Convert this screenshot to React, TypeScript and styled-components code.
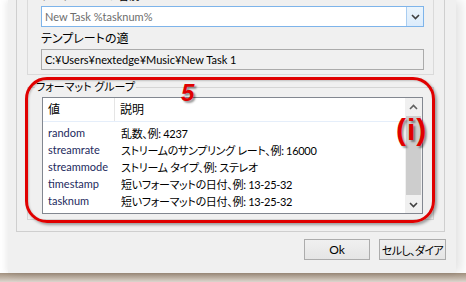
import React from "react";
import styled, { createGlobalStyle } from "styled-components";

const GlobalStyle = createGlobalStyle`
  html, body {
    margin: 0;
    padding: 0;
    background: #ffffff;
  }
  body {
    font-family: Lato, "Noto Sans CJK JP", sans-serif;
    font-size: 11px;
    font-feature-settings: "palt";
  }
`;

const Page = styled.div`
  position: relative;
  width: 466px;
  height: 282px;
  overflow: hidden;
  background: linear-gradient(to bottom, #ffffff 0, #ffffff 273px, #a39280 273px, #c2b6a9 278px, #ddd6cf 282px);
`;

const Window = styled.div`
  margin-left: 8px;
  width: 448px;
  height: 273px;
  background: #f0f0f0;
  box-shadow: -3px 0 6px rgba(0, 0, 0, 0.06), 6px 0 10px rgba(0, 0, 0, 0.1);
  display: flex;
  flex-direction: column;
`;

const OuterPanel = styled.div`
  margin-left: 8px;
  width: 429px;
  height: 232px;
  border: 1px solid #cfcfcf;
  border-top: none;
  box-sizing: border-box;
  padding-left: 10px;
  display: flex;
  flex-direction: column;
`;

const UpperBox = styled.div`
  width: 407px;
  height: 75px;
  box-sizing: border-box;
  border: 1px solid #dadada;
  border-top: none;
  padding: 0 0 0 13px;
  display: flex;
  flex-direction: column;
`;

const Label = styled.div<{ $clip?: boolean }>`
  height: 14px;
  line-height: 14px;
  font-size: 12px;
  color: #000;
  margin-top: ${({ $clip }) => ($clip ? "-11px" : "5px")};
  margin-bottom: ${({ $clip }) => ($clip ? "3px" : "0")};
  white-space: nowrap;
`;

const Combo = styled.div`
  width: 383px;
  height: 21px;
  box-sizing: border-box;
  border: 1px solid #7eb4ea;
  background: #fff;
  display: flex;
  align-items: center;
`;

const ComboText = styled.div`
  flex: 1;
  padding-left: 3px;
  color: #6d6d6d;
  line-height: 19px;
  white-space: nowrap;
`;

const ComboButton = styled.div`
  width: 16px;
  height: 19px;
  border-left: 1px solid #a9cdf1;
  background: linear-gradient(#eaf4fc, #dcecfc);
  display: flex;
  align-items: center;
  justify-content: center;
`;

const PathBox = styled.div`
  width: 383px;
  height: 21px;
  margin-top: 3px;
  box-sizing: border-box;
  border: 1px solid #ababab;
  background: #f0f0f0;
  padding-left: 3px;
  line-height: 19px;
  color: #000;
  white-space: nowrap;
`;

const Group = styled.fieldset`
  width: 407px;
  height: 140px;
  margin: 5px 0 0 0;
  padding: 0 0 0 14px;
  box-sizing: border-box;
  border: 1px solid #d5d5d5;
`;

const Legend = styled.legend`
  padding: 0 1px;
  margin-left: -7px;
  line-height: 14px;
  color: #000;
`;

const ListView = styled.div`
  width: 381px;
  height: 117px;
  margin-top: 3px;
  box-sizing: border-box;
  border: 1px solid #828790;
  background: #fff;
  display: flex;
`;

const ListBody = styled.div`
  flex: 1;
  display: flex;
  flex-direction: column;
`;

const HeaderRow = styled.div`
  height: 24px;
  display: flex;
  border-bottom: 1px solid #e5eefa;
  box-sizing: border-box;
`;

const HeaderCell = styled.div<{ $w?: number }>`
  width: ${({ $w }) => ($w ? `${$w}px` : "auto")};
  flex: ${({ $w }) => ($w ? "none" : "1")};
  padding-left: 5px;
  line-height: 23px;
  font-size: 12px;
  box-sizing: border-box;
  border-right: ${({ $w }) => ($w ? "1px solid #e5e5e5" : "none")};
  color: #000;
`;

const Rows = styled.div`
  padding-top: 2px;
  display: flex;
  flex-direction: column;
`;

const Row = styled.div`
  height: 17px;
  display: flex;
  align-items: center;
`;

const Cell = styled.div<{ $w?: number; $key?: boolean }>`
  width: ${({ $w }) => ($w ? `${$w}px` : "auto")};
  flex: ${({ $w }) => ($w ? "none" : "1")};
  padding-left: 5px;
  box-sizing: border-box;
  white-space: nowrap;
  letter-spacing: ${({ $key }) => ($key ? "0" : "-0.3px")};
  color: ${({ $key }) => ($key ? "#1d2a5e" : "#000")};
`;

const ScrollBar = styled.div`
  width: 17px;
  background: #f0f0f0;
  display: flex;
  flex-direction: column;
  align-items: center;
`;

const ScrollArrow = styled.div`
  width: 17px;
  height: 17px;
  display: flex;
  align-items: center;
  justify-content: center;
`;

const Thumb = styled.div`
  width: 15px;
  flex: 1;
  margin: 1px 0;
  background: #cdcdcd;
`;

const ButtonRow = styled.div`
  margin-top: 7px;
  margin-left: 296px;
  display: flex;
  gap: 9px;
`;

const Button = styled.div<{ $w: number; $tight?: boolean }>`
  width: ${({ $w }) => $w}px;
  height: 21px;
  box-sizing: border-box;
  border: 1px solid #acacac;
  background: linear-gradient(#f0f0f0, #e5e5e5);
  display: flex;
  align-items: center;
  justify-content: center;
  overflow: hidden;
  white-space: nowrap;
  font-size: ${({ $tight }) => ($tight ? "11px" : "12px")};
  letter-spacing: ${({ $tight }) => ($tight ? "-0.6px" : "0")};
  color: #000;
`;

const Highlight = styled.div`
  position: absolute;
  left: 25px;
  top: 77px;
  width: 410px;
  height: 146px;
  box-sizing: border-box;
  border: 3px solid #e00000;
  border-radius: 22px;
  box-shadow: 2px 2px 3px rgba(0, 0, 0, 0.35), inset 1px 1px 2px rgba(0, 0, 0, 0.2);
  pointer-events: none;
`;

const Callout = styled.div<{ $x: number; $y: number; $size: number; $italic?: boolean }>`
  position: absolute;
  left: ${({ $x }) => $x}px;
  top: ${({ $y }) => $y}px;
  font-family: "Liberation Sans", Arial, sans-serif;
  font-weight: bold;
  font-style: ${({ $italic }) => ($italic ? "italic" : "normal")};
  font-size: ${({ $size }) => $size}px;
  letter-spacing: 1px;
  line-height: 1;
  color: #e00000;
  text-shadow: 2px 2px 2px rgba(0, 0, 0, 0.4);
`;

const Chevron = ({ up }: { up?: boolean }) => (
  <svg width="9" height="6" viewBox="0 0 9 6">
    <path
      d={up ? "M1 5 L4.5 1.5 L8 5" : "M1 1 L4.5 4.5 L8 1"}
      fill="none"
      stroke={up ? "#606060" : "#404040"}
      strokeWidth="1.6"
    />
  </svg>
);

const rows = [
  ["random", "乱数、例: 4237"],
  ["streamrate", "ストリームのサンプリング レート、例: 16000"],
  ["streammode", "ストリーム タイプ、例: ステレオ"],
  ["timestamp", "短いフォーマットの日付、例: 13-25-32"],
  ["tasknum", "短いフォーマットの日付、例: 13-25-32"],
];

export default function App() {
  return (
    <Page>
      <GlobalStyle />
      <Window>
        <OuterPanel>
          <UpperBox>
            <Label $clip>テンプレートの名前</Label>
            <Combo>
              <ComboText>New Task %tasknum%</ComboText>
              <ComboButton>
                <Chevron />
              </ComboButton>
            </Combo>
            <Label>テンプレートの適</Label>
            <PathBox>C:¥Users¥nextedge¥Music¥New Task 1</PathBox>
          </UpperBox>
          <Group>
            <Legend>フォーマット グループ</Legend>
            <ListView>
              <ListBody>
                <HeaderRow>
                  <HeaderCell $w={72}>値</HeaderCell>
                  <HeaderCell>説明</HeaderCell>
                </HeaderRow>
                <Rows>
                  {rows.map(([k, v]) => (
                    <Row key={k}>
                      <Cell $w={73} $key>
                        {k}
                      </Cell>
                      <Cell>{v}</Cell>
                    </Row>
                  ))}
                </Rows>
              </ListBody>
              <ScrollBar>
                <ScrollArrow>
                  <Chevron up />
                </ScrollArrow>
                <Thumb />
                <ScrollArrow>
                  <Chevron />
                </ScrollArrow>
              </ScrollBar>
            </ListView>
          </Group>
        </OuterPanel>
        <ButtonRow>
          <Button $w={66}>Ok</Button>
          <Button $w={67} $tight>
            セルし、ダイア
          </Button>
        </ButtonRow>
      </Window>
      <Highlight />
      <Callout $x={181} $y={81} $size={24} $italic>
        5
      </Callout>
      <Callout $x={396} $y={115} $size={30}>
        (i)
      </Callout>
    </Page>
  );
}
